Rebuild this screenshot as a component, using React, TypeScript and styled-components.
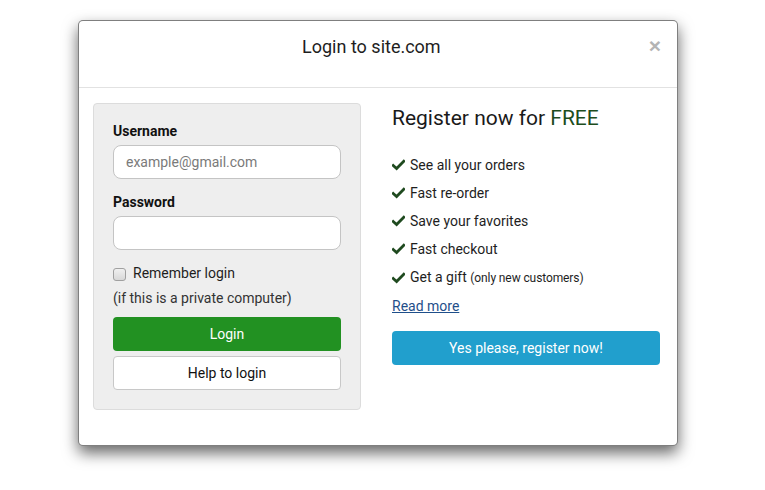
import styled, {createGlobalStyle} from "styled-components";

const GlobalStyle = createGlobalStyle`
	html, body {
		margin: 0;
		padding: 0;
		background: #ffffff;
	}
	* {
		box-sizing: border-box;
	}
	body {
		font-family: 'Roboto', 'Liberation Sans', sans-serif;
		font-size: 14px;
		color: #222222;
	}
`

const Page = styled.div`
	width: 765px;
	height: 490px;
	padding: 20px 0 0 78px;
`
const Modal = styled.div`
	width: 600px;
	background: #ffffff;
	border: 1px solid rgba(0, 0, 0, 0.5);
	border-radius: 5px;
	box-shadow: 0 7px 15px rgba(0, 0, 0, 0.6);
`
const Header = styled.div`
	display: flex;
	align-items: flex-start;
	padding: 15px 16px 29px 15px;
	border-bottom: 1px solid #e2e2e2;
`
const Title = styled.div`
	flex: 1;
	text-align: center;
	font-size: 18px;
	line-height: 22px;
	color: #1e1e1e;
`
const Close = styled.button`
	border: 0;
	background: none;
	padding: 0;
	margin-top: 1px;
	font-family: 'Liberation Sans', sans-serif;
	font-size: 21px;
	font-weight: 700;
	line-height: 18px;
	color: #b4b4b4;
	cursor: pointer;
`
const Body = styled.div`
	display: grid;
	grid-template-columns: 268px 269px;
	column-gap: 30px;
	padding: 15px 15px 35px 14px;
`
const Well = styled.div`
	background: #eeeeee;
	border: 1px solid #dcdcdc;
	border-radius: 4px;
	padding: 17px 19px 19px 19px;
`
const Label = styled.div`
	font-weight: 700;
	font-size: 14px;
	line-height: 20px;
	margin-bottom: 4px;
	color: #111111;
`
const Input = styled.input`
	display: block;
	width: 100%;
	height: 34px;
	padding: 0 12px;
	border: 1px solid #c4c4c4;
	border-radius: 8px;
	background: #ffffff;
	font-family: 'Roboto', 'Liberation Sans', sans-serif;
	font-size: 14px;
	color: #333333;
	margin-bottom: 13px;

	&::placeholder {
		color: #7a7a7a;
	}
`
const CheckRow = styled.label`
	display: flex;
	align-items: center;
	gap: 7px;
	line-height: 20px;
	margin-bottom: 5px;
	color: #1e1e1e;
`
const Checkbox = styled.span`
	width: 13px;
	height: 13px;
	border: 1px solid #a0a0a0;
	border-radius: 3px;
	background: linear-gradient(#f0f0f0, #d8d8d8);
	margin-top: 2px;
`
const Hint = styled.div`
	line-height: 20px;
	color: #333333;
	margin-bottom: 9px;
`
const Button = styled.button<{variant: "green" | "white" | "blue"}>`
	display: block;
	width: 100%;
	height: 34px;
	border-radius: 4px;
	font-family: 'Roboto', 'Liberation Sans', sans-serif;
	font-size: 14px;
	cursor: pointer;
	border: 1px solid ${props => props.variant === "white" ? "#c8c8c8" : "transparent"};
	background: ${props => props.variant === "green" ? "#229122" : props.variant === "blue" ? "#219fcd" : "#ffffff"};
	color: ${props => props.variant === "white" ? "#111111" : "#ffffff"};

	& + & {
		margin-top: 5px;
	}
`
const Register = styled.div`
	padding-left: 1px;
`
const Heading = styled.div`
	font-size: 21px;
	line-height: 30px;
	color: #1a1a1a;
	margin-bottom: 18px;
`
const Free = styled.span`
	color: #1d4d1d;
`
const List = styled.ul`
	list-style: none;
	margin: 0;
	padding: 0;
`
const Item = styled.li`
	display: flex;
	align-items: center;
	gap: 5px;
	line-height: 28px;
	color: #1e1e1e;
	white-space: pre;
`
const Small = styled.small`
	font-size: 12px;
	letter-spacing: -0.1px;
`
const ReadMore = styled.a`
	display: block;
	line-height: 28px;
	color: #1f4f8a;
	text-decoration: underline;
	margin-bottom: 11px;
`

const Check = () => (
	<svg width="13" height="12" viewBox="0 0 13 12">
		<path d="M1.2 6.4 L4.6 9.6 L11.8 2.2" fill="none" stroke="#1f4a1f" strokeWidth="2.8" strokeLinecap="square" strokeLinejoin="miter"/>
	</svg>
)

const perks = ["See all your orders", "Fast re-order", "Save your favorites", "Fast checkout"]

export default function App() {
	return (
		<Page>
			<GlobalStyle/>
			<Modal>
				<Header>
					<Title>Login to site.com</Title>
					<Close>×</Close>
				</Header>
				<Body>
					<Well>
						<Label>Username</Label>
						<Input placeholder="example@gmail.com"/>
						<Label>Password</Label>
						<Input type="password"/>
						<CheckRow>
							<Checkbox/>
							Remember login
						</CheckRow>
						<Hint>(if this is a private computer)</Hint>
						<Button variant="green">Login</Button>
						<Button variant="white">Help to login</Button>
					</Well>
					<Register>
						<Heading>Register now for <Free>FREE</Free></Heading>
						<List>
							{perks.map(perk => (
								<Item key={perk}><Check/>{perk}</Item>
							))}
							<Item><Check/><span>Get a gift <Small>(only new customers)</Small></span></Item>
						</List>
						<ReadMore href="#">Read more</ReadMore>
						<Button variant="blue">Yes please, register now!</Button>
					</Register>
				</Body>
			</Modal>
		</Page>
	)
}
